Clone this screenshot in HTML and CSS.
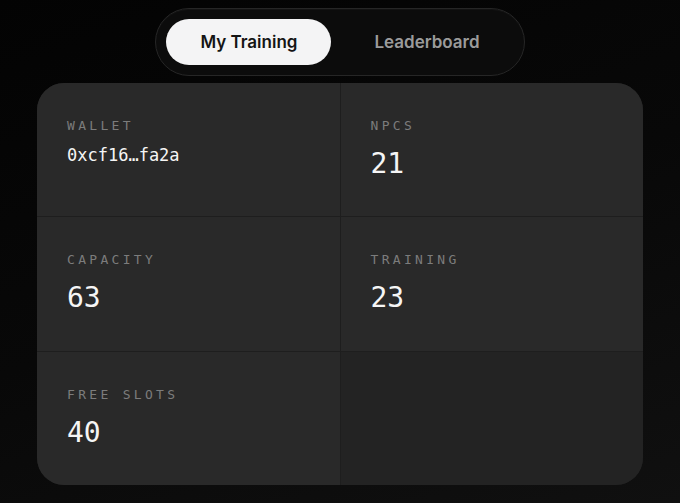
FILE: index.html
```html
<!DOCTYPE html>
<html lang="en">
<head>
<meta charset="utf-8">
<title>Training</title>
<link rel="stylesheet" href="styles.css">
</head>
<body>
<main class="page">
  <nav class="tabs">
    <button class="tab tab-active">My Training</button>
    <button class="tab">Leaderboard</button>
  </nav>
  <section class="card">
    <div class="cell">
      <div class="label">WALLET</div>
      <div class="value value-wallet">0xcf16…fa2a</div>
    </div>
    <div class="cell">
      <div class="label">NPCS</div>
      <div class="value">21</div>
    </div>
    <div class="cell">
      <div class="label">CAPACITY</div>
      <div class="value">63</div>
    </div>
    <div class="cell">
      <div class="label">TRAINING</div>
      <div class="value">23</div>
    </div>
    <div class="cell">
      <div class="label">FREE SLOTS</div>
      <div class="value">40</div>
    </div>
    <div class="cell cell-empty"></div>
  </section>
</main>
</body>
</html>
```

FILE: styles.css
```css
html, body {
  margin: 0;
  padding: 0;
  height: 100%;
}
body {
  background: linear-gradient(160deg, #030303 0%, #080808 50%, #101010 100%);
  font-family: "Inter", "Noto Sans", sans-serif;
  color: #fff;
  overflow: hidden;
}
.page {
  display: flex;
  flex-direction: column;
  align-items: center;
  padding-top: 8px;
  gap: 7px;
}
.tabs {
  display: flex;
  gap: 9px;
  padding: 10px;
  border: 1px solid #262626;
  border-radius: 999px;
  background: #0c0c0c;
  box-shadow: inset 0 1px 0 rgba(255,255,255,0.03);
}
.tab {
  height: 46px;
  padding: 0 34px;
  border: none;
  border-radius: 999px;
  background: transparent;
  color: #9b9b9b;
  font-family: "Inter", "Noto Sans", sans-serif;
  font-size: 17px;
  font-weight: 600;
  cursor: pointer;
}
.tab-active {
  background: #f4f4f5;
  color: #141414;
}
.card {
  width: 606px;
  display: grid;
  grid-template-columns: 1fr 1fr;
  grid-template-rows: 133px 134px 133px;
  gap: 1px;
  background: #1e1e1e;
  border-radius: 27px;
  overflow: hidden;
}
.cell {
  background: #292929;
  padding: 36px 30px 0;
  box-sizing: border-box;
}
.cell-empty {
  background: #232323;
}
.label {
  font-family: "DejaVu Sans Mono", monospace;
  font-size: 13px;
  line-height: 14px;
  letter-spacing: 3.3px;
  color: #7c7c7c;
}
.value {
  margin-top: 15px;
  font-family: "DejaVu Sans Mono", monospace;
  font-size: 28px;
  line-height: 32px;
  color: #f5f5f5;
}
.value-wallet {
  margin-top: 11px;
  font-size: 17px;
  line-height: 22px;
}
```
